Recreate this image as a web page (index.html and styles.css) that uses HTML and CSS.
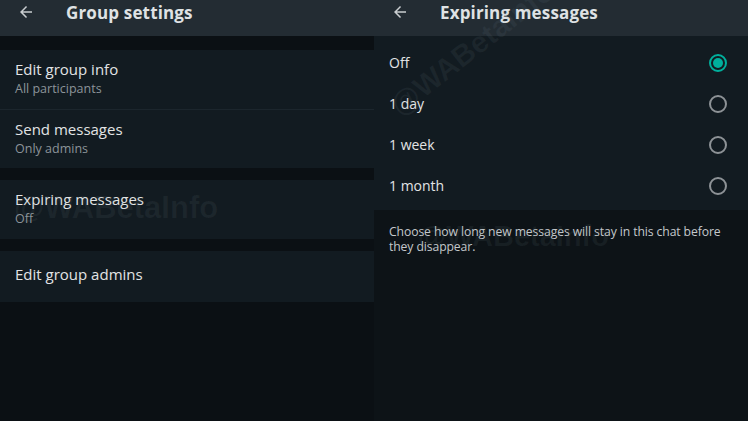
FILE: index.html
```html
<!DOCTYPE html>
<html lang="en">
<head>
  <meta charset="UTF-8" />
  <title>Group settings</title>
  <meta name="viewport" content="width=device-width, initial-scale=1.0" />
  <link rel="stylesheet" href="styles.css">
</head>
<body>
  <div class="screen">
    <div class="pane">
      <div class="appbar">
        <svg class="back" viewBox="0 0 24 24" width="18" height="18"><path d="M20 11H7.83l5.59-5.59L12 4l-8 8 8 8 1.41-1.41L7.83 13H20v-2z" fill="currentColor"/></svg>
        <span class="title">Group settings</span>
      </div>

      <div class="section first">
        <div class="row">
          <div class="label">Edit group info</div>
          <div class="sub">All participants</div>
        </div>
        <div class="row divided">
          <div class="label">Send messages</div>
          <div class="sub">Only admins</div>
        </div>
      </div>

      <div class="section">
        <div class="row">
          <div class="label">Expiring messages</div>
          <div class="sub">Off</div>
        </div>
      </div>

      <div class="section">
        <div class="row single">
          <div class="label">Edit group admins</div>
        </div>
      </div>

      <div class="mark mark-left">@WABetaInfo</div>
    </div>

    <div class="pane">
      <div class="appbar">
        <svg class="back" viewBox="0 0 24 24" width="18" height="18"><path d="M20 11H7.83l5.59-5.59L12 4l-8 8 8 8 1.41-1.41L7.83 13H20v-2z" fill="currentColor"/></svg>
        <span class="title">Expiring messages</span>
      </div>

      <div class="options">
        <div class="option"><span>Off</span><span class="radio checked"></span></div>
        <div class="option"><span>1 day</span><span class="radio"></span></div>
        <div class="option"><span>1 week</span><span class="radio"></span></div>
        <div class="option"><span>1 month</span><span class="radio"></span></div>
      </div>

      <p class="hint">Choose how long new messages will stay in this chat before they disappear.</p>

      <div class="mark mark-tilt">@WABetaInfo</div>
      <div class="mark mark-right">@WABetaInfo</div>
    </div>
  </div>
</body>
</html>
```

FILE: styles.css
```css
* {
  box-sizing: border-box;
}

html, body {
  margin: 0;
  height: 100%;
}

body {
  background: #0b1014;
  font-family: 'Open Sans', 'Noto Sans', sans-serif;
  color: #e2e4e5;
}

.screen {
  display: flex;
  width: 748px;
  height: 421px;
  overflow: hidden;
}

.pane {
  width: 374px;
  height: 100%;
  position: relative;
  overflow: hidden;
}

.appbar {
  height: 36px;
  background: #232c33;
  display: flex;
  align-items: center;
  padding-left: 17px;
  padding-bottom: 12px;
  color: #dfe2e4;
}

.back {
  color: #c9cdd0;
}

.title {
  margin-left: 31px;
  font-size: 17px;
  font-weight: 700;
  letter-spacing: 0.15px;
}

.section {
  background: #121b21;
  margin-top: 12px;
}

.section.first {
  margin-top: 14px;
}

.row {
  height: 59px;
  padding: 10px 15px 0;
}

.row.divided {
  border-top: 1px solid #1c262d;
}

.row.single {
  height: 51px;
  padding-top: 14px;
}

.label {
  font-size: 15px;
  line-height: 19px;
  color: #e2e4e5;
}

.sub {
  font-size: 12.5px;
  line-height: 19px;
  color: #8c9499;
}

.options {
  background: #121b21;
  padding: 6px 0 4px;
}

.option {
  height: 41px;
  display: flex;
  align-items: center;
  justify-content: space-between;
  padding: 0 21px 0 15px;
  font-size: 14px;
  color: #e2e4e5;
}

.radio {
  width: 18px;
  height: 18px;
  border-radius: 50%;
  border: 2px solid #8d9296;
  position: relative;
}

.radio.checked {
  border-color: #00af9c;
}

.radio.checked::after {
  content: "";
  position: absolute;
  left: 2px;
  top: 2px;
  width: 10px;
  height: 10px;
  border-radius: 50%;
  background: #00af9c;
}

.hint {
  margin: 0;
  padding: 14px 8px 0 15px;
  font-size: 12.2px;
  line-height: 15px;
  letter-spacing: -0.1px;
  color: #c4c8cb;
  background: #0d1317;
  height: 211px;
}

.mark {
  position: absolute;
  font-family: 'Liberation Sans', sans-serif;
  font-weight: 700;
  font-size: 31px;
  color: rgba(130, 150, 160, 0.09);
  white-space: nowrap;
  pointer-events: none;
}

.mark-left {
  left: 14px;
  top: 190px;
}

.mark-tilt {
  left: 20px;
  top: 92px;
  transform: rotate(-38deg);
  transform-origin: left center;
  font-size: 30px;
}

.mark-right {
  left: 44px;
  top: 220px;
  font-size: 29px;
}
```
